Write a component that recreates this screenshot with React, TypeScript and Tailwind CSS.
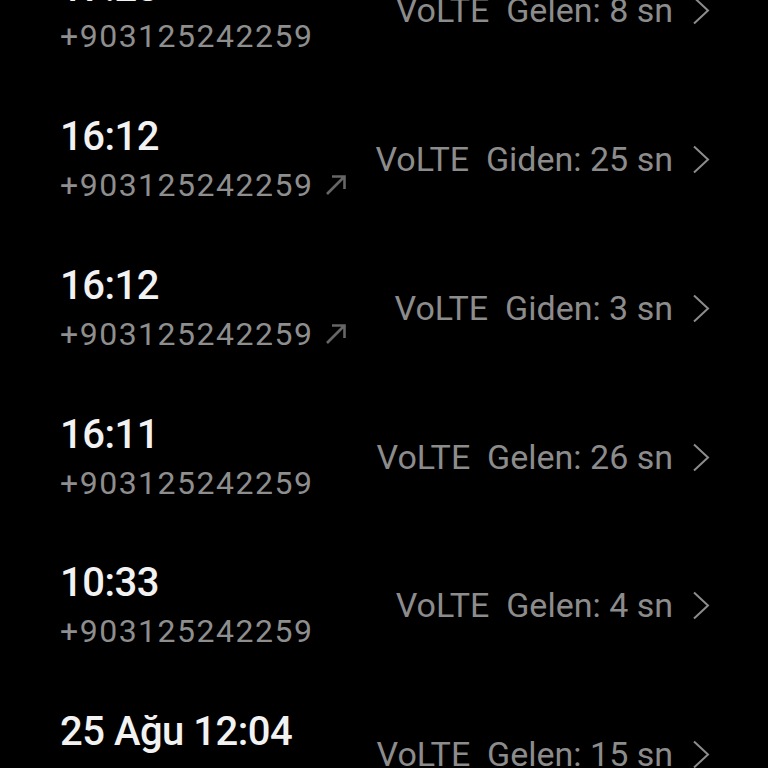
import React from "react";

type Call = {
  time: string;
  number: string;
  outgoing: boolean;
  duration: string;
};

const calls: Call[] = [
  { time: "17:23", number: "+903125242259", outgoing: false, duration: "Gelen: 8 sn" },
  { time: "16:12", number: "+903125242259", outgoing: true, duration: "Giden: 25 sn" },
  { time: "16:12", number: "+903125242259", outgoing: true, duration: "Giden: 3 sn" },
  { time: "16:11", number: "+903125242259", outgoing: false, duration: "Gelen: 26 sn" },
  { time: "10:33", number: "+903125242259", outgoing: false, duration: "Gelen: 4 sn" },
  { time: "25 Ağu 12:04", number: "+903125242259", outgoing: false, duration: "Gelen: 15 sn" },
];

function OutgoingArrow() {
  return (
    <svg width="22" height="22" viewBox="0 0 22 22" fill="none" className="ml-3 text-[#666666]">
      <path d="M2 20 L19.5 2.5 M7 2.5 H19.5 V15" stroke="currentColor" strokeWidth="2.6" />
    </svg>
  );
}

function Chevron() {
  return (
    <svg width="18" height="29" viewBox="0 0 18 29" fill="none" className="ml-[19px] text-[#8c8c8c]">
      <path d="M2 1.5 L16 14.5 L2 27.5" stroke="currentColor" strokeWidth="2" />
    </svg>
  );
}

function CallRow({ call }: { call: Call }) {
  return (
    <div className="flex items-center justify-between h-[148.75px] pl-[60px] pr-[58px]">
      {/* Left: time + number */}
      <div className="flex flex-col">
        <span className="text-[40px] leading-[46px] font-medium text-[#f2f2f2] tracking-[-0.5px]">
          {call.time}
        </span>
        <div className="flex items-center mt-[5px]">
          <span className="text-[32px] leading-[40px] text-[#8e8e8e] tracking-[1.5px]">
            {call.number}
          </span>
          {call.outgoing && <OutgoingArrow />}
        </div>
      </div>

      {/* Right: network + duration */}
      <div className="flex items-center">
        <span className="text-[34px] text-[#8c8c8c] whitespace-pre">
          {"VoLTE  " + call.duration}
        </span>
        <Chevron />
      </div>
    </div>
  );
}

export default function App() {
  return (
    <div
      className="h-[768px] w-full bg-black overflow-hidden"
      style={{ fontFamily: "Roboto, 'Noto Sans', sans-serif" }}
    >
      <div className="-mt-[63.5px] flex flex-col">
        {calls.map((c, i) => (
          <CallRow key={i} call={c} />
        ))}
      </div>
    </div>
  );
}
